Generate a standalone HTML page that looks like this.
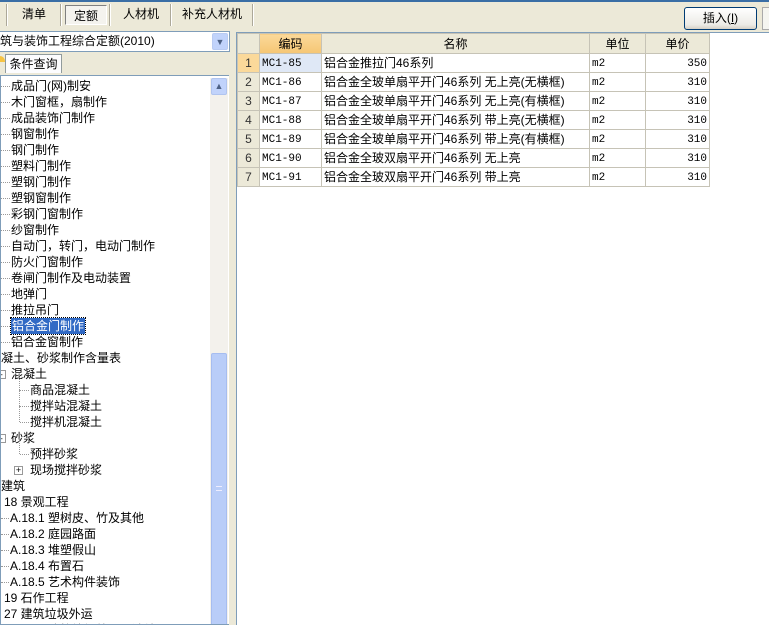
<!DOCTYPE html>
<html><head><meta charset="utf-8"><style>
*{margin:0;padding:0;box-sizing:border-box}
body{width:769px;height:625px;overflow:hidden;background:#ece9d8;font-family:"Liberation Sans","Noto Sans CJK SC",sans-serif;font-size:12px;color:#000;position:relative}
.a{position:absolute;white-space:nowrap}
.tab{position:absolute;top:4px;height:22px;line-height:20px;text-align:center;font-size:12px}
.sep{position:absolute;top:4px;width:2px;height:22px;border-left:1px solid #aca899;border-right:1px solid #fff}
.tree{position:absolute;left:0;top:75px;width:229px;height:550px;background:#fff;border:1px solid #7f9db9;border-right:none;overflow:hidden}
.tr{position:absolute;height:16px;line-height:16px;font-size:12px}
.dot{position:absolute;border-top:1px dotted #999;width:8px}
.grid{position:absolute;left:236px;top:32px;width:533px;height:593px;background:#fff;border-left:1px solid #7f9db9;border-top:1px solid #7f9db9}
table{border-collapse:collapse;position:absolute;left:0;top:0;font-size:12px}
td{border:1px solid #c6c3b6;height:19px;padding:0 2px;white-space:nowrap;line-height:16px;vertical-align:middle}
th{background:#ece9d8;font-weight:normal;height:20px;border:1px solid #c6c3b6;text-align:center}
td.n{background:#ece9d8;text-align:center;color:#333}
.m{font-family:"Liberation Mono",monospace;font-size:11px;line-height:15px}
.m span{position:relative;top:1px}
</style></head><body>
<div class="a" style="left:0;top:0;width:769px;height:2px;background:#3a6ea5"></div>
<div class="sep" style="left:6px"></div>
<div class="tab" style="left:10px;width:48px">清单</div>
<div class="sep" style="left:60px"></div>
<div class="tab" style="left:65px;width:42px;top:5px;height:20px;border:1px solid;border-color:#808080 #fff #fff #808080;background:#f4f3ee">定额</div>
<div class="sep" style="left:109px"></div>
<div class="tab" style="left:112px;width:58px">人材机</div>
<div class="sep" style="left:170px"></div>
<div class="tab" style="left:172px;width:80px">补充人材机</div>
<div class="sep" style="left:252px"></div>
<div class="a" style="left:684px;top:7px;width:73px;height:23px;border:1px solid #003c74;border-radius:3px;background:linear-gradient(#fff,#ecebe6 80%,#d6d0c5);text-align:center;line-height:21px">插入(<u>I</u>)</div>
<div class="a" style="left:762px;top:7px;width:8px;height:23px;border:1px solid #aaa;border-right:none;background:#f5f5f0"></div>

<div class="a" style="left:0;top:31px;width:230px;height:21px;background:#fff;border:1px solid #7f9db9;border-left:none;line-height:19px">筑与装饰工程综合定额(2010)</div>
<div class="a" style="left:212px;top:33px;width:16px;height:17px;background:#c1d3fb;border:1px solid #b9cbf2;border-radius:2px;color:#4d6185;font-size:9px;text-align:center;line-height:16px">&#9660;</div>
<div class="a" style="left:0;top:56px;width:5px;height:6px;background:#f6c343;border-radius:0 5px 0 0"></div>
<div class="a" style="left:5px;top:54px;width:57px;height:19px;border:1px solid #919b9c;border-bottom:none;background:#fcfcfe;line-height:18px;text-align:center">条件查询</div>

<div class="tree">
<div class="a" style="left:209px;top:2px;width:18px;height:548px;background:#f3f1ec"></div>
<div class="a" style="left:210px;top:2px;width:16px;height:17px;background:#c1d3fb;border:1px solid #b0c4ef;border-radius:2px;color:#4d6185;font-size:9px;text-align:center;line-height:15px">&#9650;</div>
<div class="a" style="left:210px;top:277px;width:16px;height:273px;background:#b9cdf8;border:1px solid #a6bdf0;border-radius:2px"></div>
<div class="a" style="left:215px;top:410px;width:6px;height:5px;border-top:1px solid #eef;border-bottom:1px solid #eef"></div>
<div id="t"></div>
</div>

<div class="a" style="left:230px;top:32px;width:6px;height:593px;background:#ece9d8"></div>

<div class="grid">
<table>
<tr><th style="width:22px"></th><th style="width:62px;background:linear-gradient(#fbd99a,#f5c674)">编码</th><th style="width:268px">名称</th><th style="width:56px">单位</th><th style="width:64px">单价</th></tr>
<tr><td class="n" style="background:#fbd99a">1</td><td class="m" style="background:#dfe8f6"><span>MC1-85</span></td><td>铝合金推拉门46系列</td><td class="m"><span>m2</span></td><td class="m" style="text-align:right"><span>350</span></td></tr>
<tr><td class="n">2</td><td class="m"><span>MC1-86</span></td><td>铝合金全玻单扇平开门46系列 无上亮(无横框)</td><td class="m"><span>m2</span></td><td class="m" style="text-align:right"><span>310</span></td></tr>
<tr><td class="n">3</td><td class="m"><span>MC1-87</span></td><td>铝合金全玻单扇平开门46系列 无上亮(有横框)</td><td class="m"><span>m2</span></td><td class="m" style="text-align:right"><span>310</span></td></tr>
<tr><td class="n">4</td><td class="m"><span>MC1-88</span></td><td>铝合金全玻单扇平开门46系列 带上亮(无横框)</td><td class="m"><span>m2</span></td><td class="m" style="text-align:right"><span>310</span></td></tr>
<tr><td class="n">5</td><td class="m"><span>MC1-89</span></td><td>铝合金全玻单扇平开门46系列 带上亮(有横框)</td><td class="m"><span>m2</span></td><td class="m" style="text-align:right"><span>310</span></td></tr>
<tr><td class="n">6</td><td class="m"><span>MC1-90</span></td><td>铝合金全玻双扇平开门46系列 无上亮</td><td class="m"><span>m2</span></td><td class="m" style="text-align:right"><span>310</span></td></tr>
<tr><td class="n">7</td><td class="m"><span>MC1-91</span></td><td>铝合金全玻双扇平开门46系列 带上亮</td><td class="m"><span>m2</span></td><td class="m" style="text-align:right"><span>310</span></td></tr>
</table>
</div>

<script>
var items=[
[10,"成品门(网)制安",1],[10,"木门窗框，扇制作",1],[10,"成品装饰门制作",1],[10,"钢窗制作",1],[10,"钢门制作",1],[10,"塑料门制作",1],[10,"塑钢门制作",1],[10,"塑钢窗制作",1],[10,"彩钢门窗制作",1],[10,"纱窗制作",1],[10,"自动门，转门，电动门制作",1],[10,"防火门窗制作",1],[10,"卷闸门制作及电动装置",1],[10,"地弹门",1],[10,"推拉吊门",1],[10,"铝合金门制作",2],[10,"铝合金窗制作",1],
[0,"凝土、砂浆制作含量表",0],[10,"混凝土",3],[29,"商品混凝土",4],[29,"搅拌站混凝土",4],[29,"搅拌机混凝土",4],[10,"砂浆",3],[29,"预拌砂浆",4],[29,"现场搅拌砂浆",5],
[0,"建筑",0],[3,"18 景观工程",0],[9,"A.18.1 塑树皮、竹及其他",1],[9,"A.18.2 庭园路面",1],[9,"A.18.3 堆塑假山",1],[9,"A.18.4 布置石",1],[9,"A.18.5 艺术构件装饰",1],[3,"19 石作工程",0],[3,"27 建筑垃圾外运",0],[9,"A.27.1 建筑垃圾外运及消纳",1]];
var h="";
items.forEach(function(it,i){var top=2+i*16;
if(it[2]==1||it[2]==2) h+='<div class="dot" style="left:0;top:'+(top+8)+'px;width:'+(it[0]-1)+'px"></div>';
if(it[2]==4) h+='<div class="dot" style="left:19px;top:'+(top+8)+'px;width:9px"></div><div class="a" style="left:18px;top:'+(top-8)+'px;height:16px;border-left:1px dotted #999"></div>';
if(it[2]==3) h+='<div class="a" style="left:-4px;top:'+(top+4)+'px;width:9px;height:9px;border:1px solid #999;background:#fff;font-size:8px;line-height:7px;text-align:center">-</div>';
if(it[2]==5) h+='<div class="a" style="left:13px;top:'+(top+4)+'px;width:9px;height:9px;border:1px solid #999;background:#fff;font-size:9px;line-height:7px;text-align:center">+</div>';
var st=it[2]==2?'background:#316ac5;color:#fff;outline:1px dotted #000;padding:0 1px;':'';
h+='<div class="tr" style="left:'+it[0]+'px;top:'+top+'px;'+st+'">'+it[1]+'</div>';});
document.getElementById("t").innerHTML=h;
</script>
</body></html>
